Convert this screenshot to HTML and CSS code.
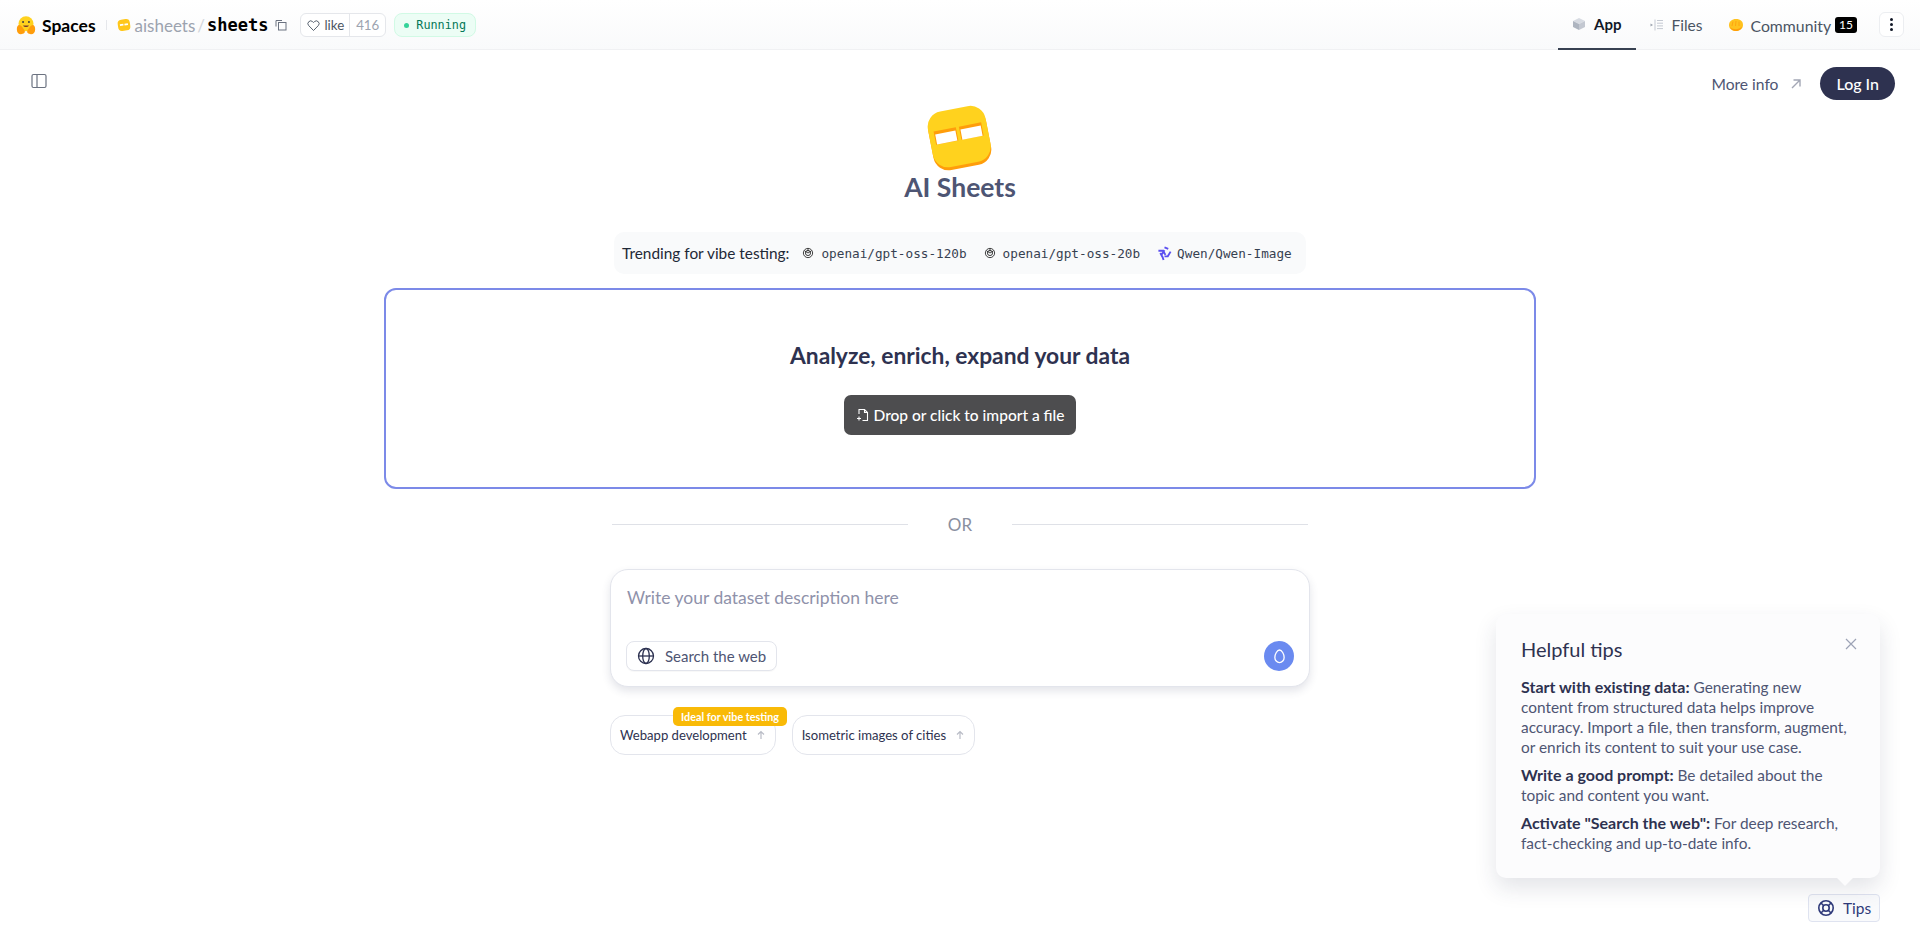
FILE: index.html
```html
<!DOCTYPE html>
<html lang="en">
<head>
<meta charset="utf-8">
<title>AI Sheets</title>
<link rel="stylesheet" href="styles.css">
</head>
<body>
<header class="topbar">
  <div class="crumbs">
    <svg class="hug" viewBox="0 0 24 24"><circle cx="12" cy="10.5" r="9" fill="#ffd21e"/><path d="M1 17c0-3 1-5 3-5s4 3 6 6-1 5-4 5-5-2-5-6zM23 17c0-3-1-5-3-5s-4 3-6 6 1 5 4 5 5-2 5-6z" fill="#ff9d0b"/><circle cx="8.5" cy="8.5" r="1.2" fill="#3a3b45"/><circle cx="15.5" cy="8.5" r="1.2" fill="#3a3b45"/><path d="M8.5 12.5c1 2.6 6 2.6 7 0z" fill="#7a3b2e"/></svg>
    <span class="brand">Spaces</span>
    <span class="sep"></span>
    <svg class="orglogo" viewBox="0 0 16 16"><rect x="1" y="1.5" width="14" height="13" rx="4.5" fill="#ffc71a" transform="rotate(-8 8 8)"/><rect x="3.4" y="6.6" width="4" height="2" fill="#fff" transform="rotate(-8 8 8)"/><rect x="8.6" y="6.6" width="4" height="2" fill="#fff" transform="rotate(-8 8 8)"/></svg>
    <span class="org">aisheets</span><span class="slash">/</span><span class="repo">sheets</span>
    <svg class="copy" viewBox="0 0 12 12" fill="none" stroke="#6b7280" stroke-width="1"><path d="M1 7.5V1.5h6"/><rect x="3.5" y="3.5" width="7.5" height="7.5"/></svg>
    <div class="like">
      <span class="like-l"><svg viewBox="0 0 14 14" fill="none" stroke="#4b5563" stroke-width="1"><path d="M7 12.4 1.9 7.2a3 3 0 0 1 0-4.3 3 3 0 0 1 4.2 0l.9.9.9-.9a3 3 0 0 1 4.2 0 3 3 0 0 1 0 4.3z"/></svg>like</span>
      <span class="like-n">416</span>
    </div>
    <div class="status"><i></i>Running</div>
  </div>
  <nav class="tabs">
    <a class="tab tab-on"><svg viewBox="0 0 14 14"><path d="M7 1 13 4 7 7 1 4z" fill="#d7dbe2"/><path d="M1 4l6 3v6l-6-3z" fill="#aeb5c0"/><path d="M13 4 7 7v6l6-3z" fill="#c3c8d1"/></svg>App</a>
    <a class="tab"><svg viewBox="0 0 14 14"><path d="M0.500 5.500 3 7 .5 8.500z" fill="#9ca3af"/><path d="M5 1.500v11M7 2.500h6M7 5.200h6M7 7.900h6M7 10.600h6" stroke="#c4c9d2" fill="none"/></svg>Files</a>
    <a class="tab tab-c"><svg viewBox="0 0 16 14"><path d="M1 7c0-3.500 3-6 7-6 4.500 0 7 2.500 7 6 0 3.500-3 6-7 6-4.500 0-7-2.500-7-6z" fill="#ffc21e"/><path d="M2 9c3 3 9 3 12-.5-1 3.500-4 4.500-6 4.500-3 0-5-1.500-6-4z" fill="#ff9d0b"/><path d="M5 3.500 4 8M8 3 7.500 8M11 3.500 11 8" stroke="#ff9d0b" stroke-width=".8" fill="none"/></svg>Community<b class="count">15</b></a>
    <button class="menu" aria-label="menu"><i></i><i></i><i></i></button>
  </nav>
</header>

<main class="page">
  <div class="toolrow">
    <svg class="panel-ic" viewBox="0 0 16 16" fill="none" stroke="#6b7280" stroke-width="1.200"><rect x="1" y="1.500" width="14" height="13" rx="1.500"/><path d="M6 1.500v13"/></svg>
    <div class="account">
      <a class="more">More info<svg viewBox="0 0 12 12" fill="none" stroke="#a3a7b5" stroke-width="1.400"><path d="M2 10 10 2M3.500 2H10v6.500"/></svg></a>
      <button class="login">Log In</button>
    </div>
  </div>

  <svg class="logo" viewBox="0 0 68 68">
    <g transform="rotate(-11 34 34)">
      <rect x="5" y="8" width="57" height="55" rx="15" fill="#ff9d0b"/>
      <rect x="5" y="5" width="57" height="55" rx="15" fill="#ffd21e"/>
      <rect x="10" y="23" width="22" height="13" fill="#ff9d0b"/>
      <rect x="35" y="23" width="22" height="13" fill="#ff9d0b"/>
      <rect x="11" y="26" width="20" height="10" fill="#fff"/>
      <rect x="36" y="26" width="20" height="10" fill="#fff"/>
    </g>
  </svg>
  <h1 class="title">AI Sheets</h1>

  <div class="trending">
    <span class="trend-label">Trending for vibe testing:</span>
    <a class="model"><svg viewBox="0 0 14 14" fill="none" stroke="#222" stroke-width="1"><circle cx="7" cy="7" r="5.400"/><circle cx="7" cy="7" r="3"/><path d="M3 4.500 7 7M11 4.500 7 7M7 2v3"/></svg>openai/gpt-oss-120b</a>
    <a class="model"><svg viewBox="0 0 14 14" fill="none" stroke="#222" stroke-width="1"><circle cx="7" cy="7" r="5.400"/><circle cx="7" cy="7" r="3"/><path d="M3 4.500 7 7M11 4.500 7 7M7 2v3"/></svg>openai/gpt-oss-20b</a>
    <a class="model model-q"><svg viewBox="0 0 16 16" fill="none" stroke="#5b4ff0" stroke-width="2"><path d="M8 1.500 12 3M1.500 5h5L9 9.500M14.500 6 11.500 11H8M3.500 7.500 6 12l1 3M8 4.500 5 9"/></svg>Qwen/Qwen-Image</a>
  </div>

  <section class="drop">
    <h2 class="drop-title">Analyze, enrich, expand your data</h2>
    <button class="import"><svg viewBox="0 0 14 14" fill="none" stroke="#fff" stroke-width="1.100"><path d="M3 6V1.500h5.500L11.500 4.500V12.500H6.500M8.500 1.500v3h3M1 10.500h4M3 8.500v4"/></svg>Drop or click to import a file</button>
  </section>

  <div class="or"><span></span><em>OR</em><span></span></div>

  <section class="prompt">
    <div class="placeholder">Write your dataset description here</div>
    <div class="prompt-foot">
      <button class="web"><svg viewBox="0 0 18 18" fill="none" stroke="#2c3150" stroke-width="1.300"><circle cx="9" cy="9" r="7.500"/><ellipse cx="9" cy="9" rx="3.300" ry="7.500"/><path d="M1.500 9h15"/></svg>Search the web</button>
      <button class="send" aria-label="send"><svg viewBox="0 0 14 18" fill="none" stroke="#fff" stroke-width="1.400"><path d="M7 2c2.500 0 5 4.500 5 8a5 5.500 0 0 1-10 0c0-3.500 2.500-8 5-8z"/></svg></button>
    </div>
  </section>

  <div class="chips">
    <button class="chip"><span class="tag">Ideal for vibe testing</span>Webapp development<svg viewBox="0 0 10 10" fill="none" stroke="#b9bcc6" stroke-width="1.200"><path d="M5 9V1.500M2 4.500l3-3 3 3"/></svg></button>
    <button class="chip">Isometric images of cities<svg viewBox="0 0 10 10" fill="none" stroke="#b9bcc6" stroke-width="1.200"><path d="M5 9V1.500M2 4.500l3-3 3 3"/></svg></button>
  </div>
</main>

<aside class="tips">
  <div class="tips-card">
    <svg class="tips-x" viewBox="0 0 12 12" fill="none" stroke="#9ca3b5" stroke-width="1.200"><path d="M1 1l10 10M11 1 1 11"/></svg>
    <h3>Helpful tips</h3>
    <p><b>Start with existing data:</b> Generating new content from structured data helps improve accuracy. Import a file, then transform, augment, or enrich its content to suit your use case.</p>
    <p><b>Write a good prompt:</b> Be detailed about the topic and content you want.</p>
    <p><b>Activate "Search the web":</b> For deep research, fact-checking and up-to-date info.</p>
  </div>
  <button class="tips-btn"><svg viewBox="0 0 18 18" fill="none" stroke="#2f3a7a" stroke-width="1.600"><circle cx="9" cy="9" r="7.200"/><circle cx="9" cy="9" r="3.200"/><path d="M4 4l2.700 2.700M14 4l-2.700 2.700M4 14l2.700-2.700M14 14l-2.700-2.700"/></svg>Tips</button>
</aside>
</body>
</html>
```
FILE: styles.css
```css
* { box-sizing: border-box; }
html, body { margin: 0; height: 942px; overflow: hidden; }
body { font-family: "Lato", "Liberation Sans", sans-serif; color: #2c3150; background: #fff; position: relative; }
button { font-family: inherit; cursor: pointer; }
svg { display: block; flex: none; }
a { color: inherit; }

.topbar { height: 50px; display: flex; justify-content: space-between; align-items: stretch; padding: 0 16px; border-bottom: 1px solid #f0f1f3; background: linear-gradient(#fff, #f9fafb); }
.crumbs { display: flex; align-items: center; padding-top: 1px; }
.hug { width: 20px; height: 20px; margin-right: 6px; }
.brand { font-size: 17.500px; font-weight: 700; color: #000; }
.sep { width: 1px; height: 10px; background: #e5e7eb; margin: 0 10px; }
.orglogo { width: 14px; height: 14px; margin-right: 4px; }
.org { font-size: 17px; color: #9ca3af; }
.slash { font-size: 17px; color: #d1d5db; margin: 0 2px; }
.repo { font-family: "DejaVu Sans Mono", monospace; font-weight: 700; font-size: 17px; color: #000; }
.copy { width: 12px; height: 12px; margin: 0 13px 0 7px; }
.like { display: flex; height: 24px; border: 1px solid #e5e7eb; border-radius: 6px; font-size: 13.300px; background: #fff; align-items: stretch; }
.like-l { display: flex; align-items: center; gap: 4px; padding: 0 5px 0 6px; color: #4b5563; border-right: 1px solid #e5e7eb; }
.like-l svg { width: 13px; height: 13px; }
.like-n { display: flex; align-items: center; padding: 0 6px; color: #9ca3af; }
.status { display: flex; align-items: center; gap: 7px; height: 24px; margin-left: 8px; padding: 0 9px; border: 1px solid #d1fae5; border-radius: 8px; background: #ecfdf5; color: #047857; font-family: "DejaVu Sans Mono", monospace; font-size: 11.800px; }
.status i { width: 5px; height: 5px; border-radius: 50%; background: #34d399; }

.tabs { display: flex; align-items: stretch; }
.tab { display: flex; align-items: center; gap: 8px; padding: 0 14px; font-size: 15.500px; color: #4b5563; margin-bottom: -1px; }
.tab svg { width: 14px; height: 14px; }
.tab-c { gap: 7px; padding: 0 14px 0 11px; font-size: 15.800px; }
.tab-c svg { width: 16px; height: 14px; }
.tab-on { color: #111827; font-size: 15px; font-weight: 700; border-bottom: 2px solid #374151; padding: 0 14px; }
.count { display: inline-block; margin-left: -3px; background: #000; color: #fff; font-size: 12px; line-height: 14px; font-weight: 400; border-radius: 3px; padding: 1px 4px; }
.menu { display: flex; flex-direction: column; gap: 2px; align-items: center; justify-content: center; align-self: center; width: 25px; height: 25px; margin-left: 8px; padding: 0; border: 1px solid #eceef1; border-radius: 6px; background: #fff; }
.menu i { width: 3px; height: 3px; border-radius: 50%; background: #111827; }

.page { display: flex; flex-direction: column; align-items: center; position: relative; }
.toolrow { position: absolute; top: 0; left: 0; right: 0; display: flex; justify-content: space-between; align-items: flex-start; padding: 17px 25px 0 31px; }
.panel-ic { width: 16px; height: 16px; margin-top: 6px; }
.account { display: flex; align-items: center; gap: 18px; }
.more { display: flex; align-items: center; gap: 12px; font-size: 15.600px; color: #4e5573; }
.more svg { width: 12px; height: 12px; }
.login { height: 33px; padding: 0 16px; border: 0; border-radius: 17px; background: #2e3250; color: #fff; font-size: 16px; font-weight: 500; }

.logo { width: 70px; height: 70px; margin-top: 53px; }
.title { margin: -2px 0 0; font-size: 26.500px; line-height: 32px; font-weight: 700; color: #4e5573; }

.trending { display: flex; align-items: center; height: 42px; width: 692px; margin-top: 29px; padding: 0 12px 0 8px; border-radius: 10px; background: #f9fafb; }
.trend-label { font-size: 15.400px; color: #1f2937; margin-right: 13px; white-space: nowrap; }
.model { display: flex; align-items: center; gap: 7px; font-family: "DejaVu Sans Mono", monospace; font-size: 12.700px; color: #374151; margin-right: 17px; white-space: nowrap; }
.model svg { width: 12px; height: 12px; }
.model-q { margin-right: 0; gap: 5px; }
.model-q svg { width: 15px; height: 15px; }

.drop { width: 1152px; height: 201px; margin-top: 14px; border: 2px solid #7c8ae8; border-radius: 12px; display: flex; flex-direction: column; align-items: center; }
.drop-title { margin: 49px 0 0; font-size: 22.800px; line-height: 32px; font-weight: 700; color: #2e3250; }
.import { display: flex; align-items: center; gap: 4px; height: 40px; margin-top: 24px; padding: 0 12px 1px; border: 0; border-radius: 7px; background: #4d4d4f; color: #fff; font-size: 15.500px; font-weight: 500; }
.import svg { width: 14px; height: 14px; }

.or { display: flex; align-items: center; width: 696px; margin-top: 23px; height: 24px; }
.or span { flex: 1; height: 1px; background: #dfe1e7; }
.or em { font-style: normal; font-size: 17px; color: #8a8f9f; width: 104px; text-align: center; }

.prompt { width: 700px; height: 118px; margin-top: 33px; border: 1px solid #e3e5ec; border-radius: 18px; box-shadow: 0 4px 8px rgba(60,65,100,.14); background: #fff; padding: 16px 15px 15px; display: flex; flex-direction: column; justify-content: space-between; }
.placeholder { padding-left: 1px; font-size: 17.500px; line-height: 24px; color: #8f92aa; }
.prompt-foot { display: flex; justify-content: space-between; align-items: center; }
.web { display: flex; align-items: center; gap: 10px; height: 30px; padding: 0 10px 1px; border: 1px solid #e3e5ec; border-radius: 8px; background: #fff; color: #4e5573; font-size: 15px; box-shadow: 0 1px 1px rgba(0,0,0,.03); }
.web svg { width: 18px; height: 18px; }
.send { width: 30px; height: 30px; border: 0; border-radius: 50%; background: #6a8af0; display: flex; align-items: center; justify-content: center; padding: 0; }
.send svg { width: 13px; height: 17px; }

.chips { display: flex; gap: 16px; width: 700px; margin-top: 28px; }
.chip { position: relative; display: flex; align-items: center; gap: 9px; height: 40px; padding: 0 9px 1px; border: 1px solid #e3e5ec; border-radius: 15px; background: #fff; color: #2e3250; font-size: 13.100px; }
.chip svg { width: 10px; height: 10px; }
.tag { position: absolute; left: 62px; top: -9px; height: 19px; padding: 0 8px; border-radius: 5px; background: #f9ba07; color: #fff; font-size: 10.800px; font-weight: 700; line-height: 19px; white-space: nowrap; }

.tips { position: absolute; top: 614px; left: 1496px; width: 384px; display: flex; flex-direction: column; align-items: flex-end; }
.tips-card { position: relative; width: 384px; height: 264px; padding: 21px 25px 0 25px; border-radius: 10px; background: #fcfcfd; box-shadow: 0 10px 22px rgba(40,45,80,.13); }
.tips-card::after { content: ""; position: absolute; right: 26px; bottom: -8px; width: 18px; height: 18px; transform: rotate(45deg) scale(.7); background: #fcfcfd; }
.tips-x { position: absolute; top: 24px; right: 23px; width: 12px; height: 12px; }
.tips-card h3 { margin: 0 0 14px; font-size: 20px; line-height: 28px; font-weight: 400; color: #2e3250; }
.tips-card p { margin: 0 0 8px; font-size: 15.400px; line-height: 20px; color: #4e5573; }
.tips-card b { color: #2e3250; font-size: 16px; font-weight: 700; }
.tips-btn { margin-top: 16px; display: flex; align-items: center; gap: 8px; height: 28px; width: 72px; padding: 0 8px; border: 1px solid #dfe3f0; border-radius: 4px; background: #f9fafc; color: #2f3a7a; font-size: 15.500px; }
.tips-btn svg { width: 18px; height: 18px; }
```
